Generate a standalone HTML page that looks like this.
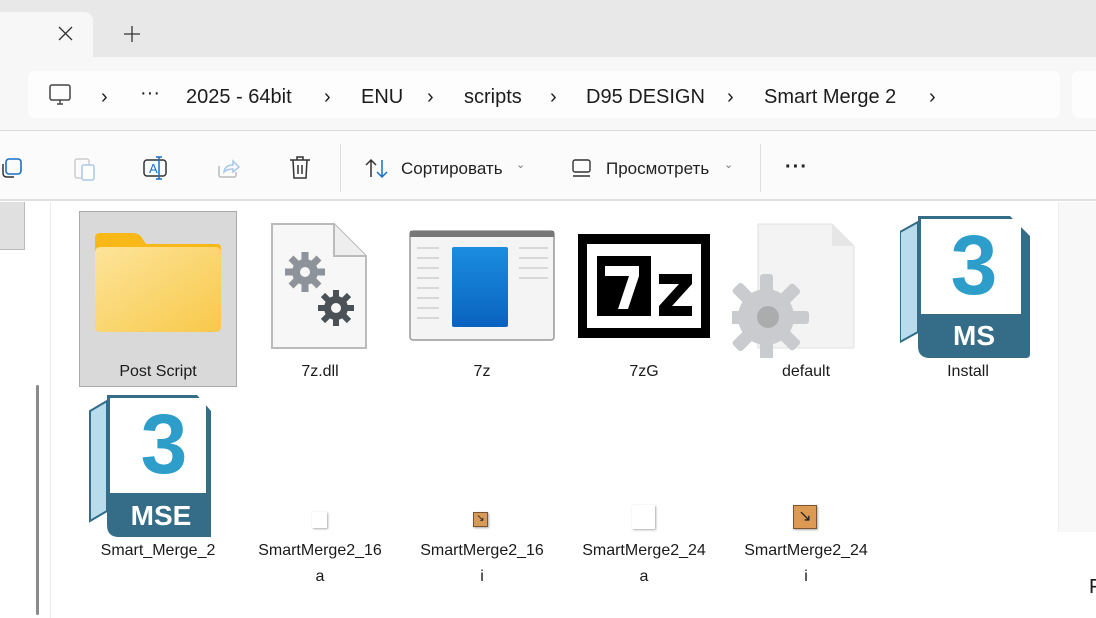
<!DOCTYPE html>
<html><head><meta charset="utf-8"><style>
*{margin:0;padding:0;box-sizing:border-box}
body{width:1096px;height:618px;overflow:hidden;background:#fff;font-family:"Segoe UI","Liberation Sans",sans-serif;color:#1a1a1a;position:relative}
.abs{position:absolute}
.tabs{left:0;top:0;width:1096px;height:58px;background:#e8e8e8}
.tab{left:-10px;top:12px;width:103px;height:46px;background:#f7f7f7;border-radius:0 9px 0 0}
.addr{left:0;top:57px;width:1096px;height:74px;background:#f7f7f7;border-bottom:1px solid #dcdcdc}
.box{left:28px;top:71px;width:1032px;height:47px;background:#fdfdfd;border-radius:7px}
.box2{left:1072px;top:71px;width:40px;height:47px;background:#fdfdfd;border-radius:7px}
.crumb{top:86px;font-size:20px;color:#1c1c1c;white-space:nowrap}
.tb{left:0;top:131px;width:1096px;height:70px;background:#fbfbfb;border-bottom:2px solid #e0e0e0}
.tbt{top:159px;font-size:17px;color:#222}
.lbl{font-size:16px;text-align:center;width:162px;line-height:26px;color:#1a1a1a}
</style></head><body>
<div class="abs tabs"></div>
<div class="abs tab"></div>
<svg class="abs" style="left:58px;top:26px" width="15" height="15"><path d="M1 1L14 14M14 1L1 14" stroke="#333" stroke-width="1.3"/></svg>
<svg class="abs" style="left:124px;top:26px" width="16" height="16"><path d="M8 0V16M0 8H16" stroke="#333" stroke-width="1.3"/></svg>
<div class="abs addr"></div>
<div class="abs box"></div><div class="abs box2"></div>
<svg class="abs" style="left:48px;top:83px" width="24" height="24"><rect x="2" y="2" width="20" height="15" rx="2" fill="none" stroke="#444" stroke-width="1.5"/><path d="M9 21H15M12 17V21" stroke="#444" stroke-width="1.5"/></svg>
<div class="abs crumb" style="left:101px">›</div>
<div class="abs crumb" style="left:140px;top:82px">···</div>
<div class="abs crumb" style="left:186px">2025 - 64bit</div>
<div class="abs crumb" style="left:324px">›</div>
<div class="abs crumb" style="left:361px">ENU</div>
<div class="abs crumb" style="left:427px">›</div>
<div class="abs crumb" style="left:464px">scripts</div>
<div class="abs crumb" style="left:550px">›</div>
<div class="abs crumb" style="left:586px">D95 DESIGN</div>
<div class="abs crumb" style="left:727px">›</div>
<div class="abs crumb" style="left:764px">Smart Merge 2</div>
<div class="abs crumb" style="left:929px">›</div>
<div class="abs tb"></div>
<svg class="abs" style="left:0;top:156px" width="26" height="24"><rect x="6" y="3" width="15" height="15" rx="3" fill="none" stroke="#1b6fc4" stroke-width="1.6"/><path d="M3 8V17Q3 21 7 21H14" fill="none" stroke="#333" stroke-width="1.5"/></svg>
<svg class="abs" style="left:72px;top:155px" width="26" height="27"><rect x="3" y="4" width="14" height="19" rx="2" fill="none" stroke="#ccc" stroke-width="1.5"/><rect x="10" y="10" width="12" height="15" rx="2" fill="#fff" stroke="#a8c8e8" stroke-width="1.5"/></svg>
<svg class="abs" style="left:142px;top:155px" width="28" height="27"><rect x="2" y="5" width="22" height="16" rx="3" fill="none" stroke="#333" stroke-width="1.5"/><text x="7" y="18" font-size="13" fill="#1b6fc4" font-family="Liberation Sans">A</text><path d="M17 2V24M14 2H20M14 24H20" stroke="#1b6fc4" stroke-width="1.5"/></svg>
<svg class="abs" style="left:216px;top:156px" width="26" height="24"><path d="M3 10V19Q3 21 5 21H18Q20 21 20 19V16" fill="none" stroke="#bbb" stroke-width="1.5"/><path d="M8 16Q9 9 17 9V5L23 11L17 16V13Q11 13 8 16Z" fill="none" stroke="#a8c8e8" stroke-width="1.5"/></svg>
<svg class="abs" style="left:288px;top:155px" width="24" height="26"><path d="M2 5H22M9 5V2H15V5M5 5L6 23H18L19 5M10 10V19M14 10V19" fill="none" stroke="#333" stroke-width="1.5"/></svg>
<div class="abs" style="left:340px;top:144px;width:1px;height:48px;background:#ddd"></div>
<svg class="abs" style="left:364px;top:157px" width="26" height="24"><path d="M7 20V3M2 8L7 3L12 8" fill="none" stroke="#333" stroke-width="1.5"/><path d="M18 3V20M13 15L18 20L23 15" fill="none" stroke="#1b6fc4" stroke-width="1.5"/></svg>
<div class="abs tbt" style="left:401px">Сортировать</div>
<div class="abs tbt" style="left:516px;top:158px;font-size:11px;color:#777">⌄</div>
<svg class="abs" style="left:571px;top:158px" width="22" height="20"><rect x="2" y="2" width="17" height="12" rx="2" fill="none" stroke="#333" stroke-width="1.4"/><path d="M2 18H19" stroke="#333" stroke-width="1.4"/></svg>
<div class="abs tbt" style="left:606px">Просмотреть</div>
<div class="abs tbt" style="left:724px;top:158px;font-size:11px;color:#777">⌄</div>
<div class="abs" style="left:760px;top:144px;width:1px;height:48px;background:#ddd"></div>
<div class="abs tbt" style="left:785px;top:156px;font-size:20px;letter-spacing:1px;font-weight:bold">···</div>
<!-- left pane -->
<div class="abs" style="left:0;top:202px;width:25px;height:48px;background:#e0e0e0;border-right:1px solid #bbb;border-bottom:1px solid #bbb"></div>
<div class="abs" style="left:36px;top:385px;width:3px;height:230px;background:#8a8a8a;border-radius:2px"></div>
<div class="abs" style="left:50px;top:202px;width:1px;height:416px;background:#ececec"></div>
<div class="abs" style="left:1058px;top:202px;width:38px;height:330px;background:#f8f8f8;border-left:1px solid #eee"></div>
<div class="abs" style="left:1089px;top:576px;font-size:20px">F</div>
<!-- selected -->
<div class="abs" style="left:79px;top:211px;width:158px;height:176px;background:#d9d9d9;border:1px solid #aaa"></div>
<!-- folder -->
<svg class="abs" style="left:93px;top:232px" width="130" height="102"><defs><linearGradient id="fg" x1="0" y1="0" x2="1" y2="1"><stop offset="0" stop-color="#fde49a"/><stop offset="1" stop-color="#f8c94a"/></linearGradient></defs><path d="M2 6Q2 1 7 1H40Q46 1 49 6L53 12H124Q128 12 128 16V40H2Z" fill="#f7b818"/><rect x="2" y="15" width="126" height="85" rx="5" fill="url(#fg)"/></svg>
<!-- 7z.dll -->
<svg class="abs" style="left:270px;top:222px" width="100" height="128"><path d="M2 2H64L96 34V126H2Z" fill="#f7f7f7" stroke="#bbb" stroke-width="2"/><path d="M64 2V34H96" fill="#eee" stroke="#bbb" stroke-width="2"/>
<g fill="#8e9399"><circle cx="35" cy="50" r="13"/><g stroke="#8e9399" stroke-width="7"><path d="M35 30V70M15 50H55M21 36L49 64M49 36L21 64"/></g></g><circle cx="35" cy="50" r="5" fill="#f7f7f7"/>
<g fill="#4b5257"><circle cx="66" cy="86" r="12"/><g stroke="#4b5257" stroke-width="6"><path d="M66 68V104M48 86H84M53 73L79 99M79 73L53 99"/></g></g><circle cx="66" cy="86" r="5" fill="#f7f7f7"/></svg>
<!-- 7z window -->
<svg class="abs" style="left:409px;top:230px" width="146" height="112"><rect x="1" y="1" width="144" height="109" rx="3" fill="#f4f4f4" stroke="#999" stroke-width="1.5"/><rect x="1" y="1" width="144" height="6" fill="#777"/><defs><linearGradient id="bg" x1="0" y1="0" x2="0" y2="1"><stop offset="0" stop-color="#1a8de0"/><stop offset="1" stop-color="#0a62bf"/></linearGradient></defs><rect x="43" y="17" width="56" height="80" rx="2" fill="url(#bg)"/><g stroke="#bbb" stroke-width="1"><path d="M8 18H30M8 28H30M8 38H30M8 48H30M8 58H30M8 68H30M8 78H30M8 88H30M110 18H139M110 28H139M110 38H139M110 48H139"/></g></svg>
<!-- 7zG -->
<svg class="abs" style="left:578px;top:234px" width="132" height="104"><rect x="0" y="0" width="132" height="104" fill="#000"/><rect x="9" y="10" width="114" height="84" fill="#fff"/><rect x="19" y="22" width="54" height="60" fill="#000"/><path d="M27 32H61V42L50 75H40L51 42H27Z" fill="#fff"/><path d="M81 40H114V50L94 72H114V82H81V72L101 50H81Z" fill="#000"/></svg>
<!-- default -->
<svg class="abs" style="left:732px;top:222px" width="125" height="136"><path d="M26 2H100L122 24V126H26Z" fill="#f3f3f3" stroke="#e2e2e2"/><path d="M100 2V24H122Z" fill="#e6e6e6"/><g fill="#c9cbce"><circle cx="34" cy="95" r="28"/><rect x="28" y="52" width="13" height="86" rx="3"/><rect x="-9" y="89" width="86" height="13" rx="3"/><rect x="28" y="52" width="13" height="86" rx="3" transform="rotate(45 34 95)"/><rect x="28" y="52" width="13" height="86" rx="3" transform="rotate(-45 34 95)"/></g><circle cx="36" cy="95" r="11" fill="#888" opacity=".45"/></svg>
<!-- MS icons -->
<svg class="abs" style="left:900px;top:214px" width="138" height="146"><path d="M0 18L18 8V118L0 128Z" fill="#b8dceb" stroke="#336b88" stroke-width="2"/><path d="M18 2H110L130 22V140Q130 144 126 144H30Q18 144 18 132Z" fill="#356d88"/><rect x="21" y="5" width="100" height="95" fill="#fff"/><text x="74" y="80" text-anchor="middle" font-size="84" font-weight="bold" font-family="Liberation Sans" fill="#2d9dca">3</text><text x="74" y="131" text-anchor="middle" font-size="28" font-weight="bold" font-family="Liberation Sans" fill="#fff">MS</text></svg>
<svg class="abs" style="left:89px;top:393px" width="138" height="146"><path d="M1 18L18 8V118L1 128Z" fill="#b8dceb" stroke="#336b88" stroke-width="2"/><path d="M18 2H108L122 18V144H30Q18 144 18 132Z" fill="#356d88"/><rect x="21" y="5" width="96" height="95" fill="#fff"/><text x="75" y="80" text-anchor="middle" font-size="84" font-weight="bold" font-family="Liberation Sans" fill="#2d9dca">3</text><text x="72" y="132" text-anchor="middle" font-size="28" font-weight="bold" font-family="Liberation Sans" fill="#fff">MSE</text></svg>
<!-- small icons -->
<div class="abs" style="left:312px;top:512px;width:15px;height:16px;background:#fff;box-shadow:1px 1px 2px #aaa"></div>
<div class="abs" style="left:473px;top:512px;width:15px;height:15px;background:#d79a5a;border:1px solid #7a5530;box-shadow:1px 1px 2px #aaa;font-size:10px;line-height:12px;text-align:center;color:#222">↘</div>
<div class="abs" style="left:632px;top:505px;width:23px;height:24px;background:#fff;box-shadow:1px 1px 2px #aaa"></div>
<div class="abs" style="left:793px;top:505px;width:24px;height:24px;background:#dd9a55;border:1px solid #7a5530;box-shadow:1px 1px 2px #aaa;font-size:16px;line-height:21px;text-align:center;color:#222">↘</div>
<!-- labels -->
<div class="abs lbl" style="left:77px;top:359px">Post Script</div>
<div class="abs lbl" style="left:239px;top:359px">7z.dll</div>
<div class="abs lbl" style="left:401px;top:359px">7z</div>
<div class="abs lbl" style="left:563px;top:359px">7zG</div>
<div class="abs lbl" style="left:725px;top:359px">default</div>
<div class="abs lbl" style="left:887px;top:359px">Install</div>
<div class="abs lbl" style="left:77px;top:538px">Smart_Merge_2</div>
<div class="abs lbl" style="left:239px;top:538px">SmartMerge2_16<br>a</div>
<div class="abs lbl" style="left:401px;top:538px">SmartMerge2_16<br>i</div>
<div class="abs lbl" style="left:563px;top:538px">SmartMerge2_24<br>a</div>
<div class="abs lbl" style="left:725px;top:538px">SmartMerge2_24<br>i</div>
</body></html>
